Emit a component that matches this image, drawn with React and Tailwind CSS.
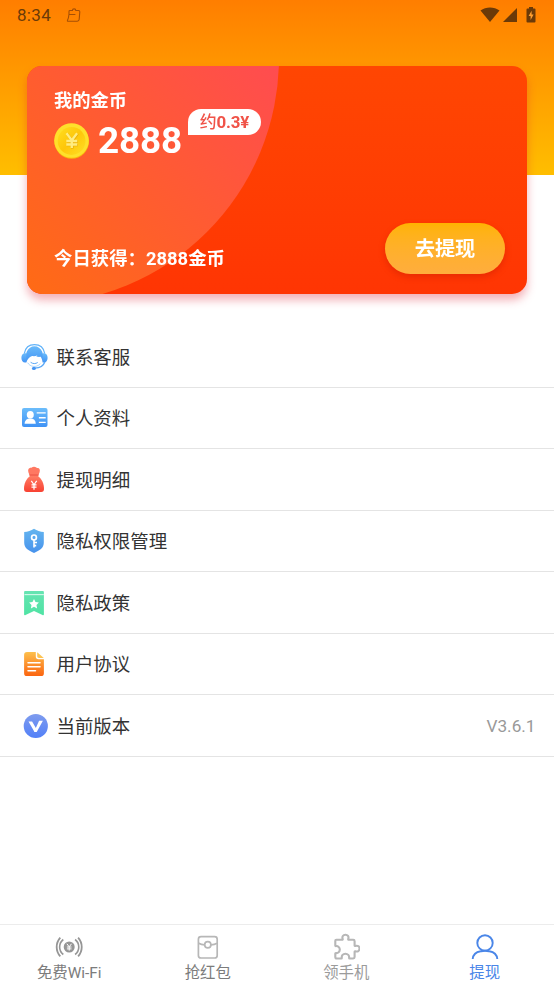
const MENU = [
  { label: '联系客服', Icon: ServiceIcon },
  { label: '个人资料', Icon: ProfileIcon },
  { label: '提现明细', Icon: MoneyBagIcon },
  { label: '隐私权限管理', Icon: ShieldIcon },
  { label: '隐私政策', Icon: BookmarkIcon },
  { label: '用户协议', Icon: DocumentIcon },
  { label: '当前版本', Icon: VersionIcon, value: 'V3.6.1' },
]

const TABS = [
  { label: '免费Wi-Fi', Icon: WifiCoinIcon, color: 'text-[#7c7c7c]' },
  { label: '抢红包', Icon: RedPacketIcon, color: 'text-[#7c7c7c]' },
  { label: '领手机', Icon: PuzzleIcon, color: 'text-[#9b9b9b]' },
  { label: '提现', Icon: UserIcon, color: 'text-[#4a86e8]' },
]

function ServiceIcon() {
  return (
    <svg width="28" height="28" viewBox="-0.5 0 28 28" fill="none">
      <defs>
        <linearGradient id="service" x1="0" y1="0" x2="0" y2="1">
          <stop stopColor="#69bafa" />
          <stop offset="1" stopColor="#4394f4" />
        </linearGradient>
      </defs>
      <path d="M3.8 10.5C4.8 5 8.8 1.7 14 1.7s9.2 3.3 10.2 8.8" stroke="#62b3f9" strokeWidth="1.3" />
      <path d="M5.6 19.5C3.6 11.5 7.2 3.3 14 3.3s10.4 8.2 8.4 16.2c-.6-2.600-1.300-4.300-2.300-5.700-1.600.2-3.300 0-4.300-.3l1.200-1.200c-1.700 1-3.600 1.100-5.400.8-2.200.7-4.400 2.700-6 6.400Z" fill="url(#service)" />
      <path d="M3.7 10.3h2.100v9.200H4.5C2.4 19.5.9 17.700.9 15s1-4 2.800-4.700ZM24.3 10.300h-2.100v9.200h1.300c2.100 0 3.600-1.800 3.600-4.500s-1-4-2.800-4.700Z" fill="url(#service)" />
      <path d="M7.2 19.7c2 4 8.700 5.500 12.600 1" stroke="#8cc5f9" strokeWidth=".7" />
      <path d="M10.4 19.5c2 1.500 4.700 1.500 6.500.2" stroke="#5aa8f7" strokeWidth="1" strokeLinecap="round" />
      <path d="M24.3 19c-1.300 3.800-4.800 6-10 6.200" stroke="#5aa8f7" strokeWidth="1.3" />
      <ellipse cx="13.4" cy="25.4" rx="2" ry="1.7" fill="#4394f4" />
    </svg>
  )
}

function ProfileIcon() {
  return (
    <svg width="28" height="28" viewBox="-0.5 0 28 28" fill="none">
      <defs>
        <linearGradient id="profile" x1="0" y1="0" x2="0" y2="1">
          <stop stopColor="#6cbdfb" />
          <stop offset="1" stopColor="#3f92f5" />
        </linearGradient>
      </defs>
      <rect x="1.5" y="4" width="25.500" height="19" rx="2" fill="url(#profile)" />
      <ellipse cx="9.8" cy="10.8" rx="3.500" ry="3.800" fill="#fff" />
      <path d="M4.1 19.700c.1-3.400 2.300-5.300 5.700-5.300s5.400 1.900 5.500 5.300Z" fill="#fff" />
      <path d="M16.200 8.900h9M18.400 13.700h6.800M18.400 18.400h6.800" stroke="#fff" strokeWidth="1.400" />
    </svg>
  )
}

function MoneyBagIcon() {
  return (
    <svg width="28" height="28" viewBox="0 0 28 28" fill="none">
      <defs>
        <linearGradient id="bag" x1="0" y1="0" x2="0" y2="1">
          <stop stopColor="#ff7c64" />
          <stop offset="1" stopColor="#f84132" />
        </linearGradient>
      </defs>
      <path d="M10.2 10.5C8.7 7.5 7.5 4.7 8.5 3.1c.8-1.2 2.400-.7 3.200-1.500 1.200-1 3.400-1 4.600 0 .8.8 2.400.3 3.200 1.500 1 1.600-.2 4.400-1.700 7.400Z" fill="#ff7862" />
      <path d="M9.3 9h9.400" stroke="#ea5344" strokeWidth="1" />
      <path d="M10 10.100h8c3.800 3 6 7.700 6 12.600 0 2.300-.9 3.300-2.800 3.300H6.800C4.900 26 4 25 4 22.700c0-4.900 2.200-9.600 6-12.600Z" fill="url(#bag)" />
      <path d="m11.3 14.800 2.700 4 2.700-4M14 18.800v5M11.500 18.900h5M11.500 21.100h5" stroke="#fff" strokeWidth="1.200" />
    </svg>
  )
}

function ShieldIcon() {
  return (
    <svg width="28" height="28" viewBox="0 0 28 28" fill="none">
      <defs>
        <linearGradient id="shield" x1="0" y1="0" x2="0" y2="1">
          <stop stopColor="#64b5ef" />
          <stop offset="1" stopColor="#4792ec" />
        </linearGradient>
      </defs>
      <path d="M14 1.800c3 2 6.200 3 9.800 3.200v10.800c0 5.200-4.200 7.800-9.800 10.200-5.600-2.400-9.800-5-9.800-10.200V5C7.800 4.800 11 3.800 14 1.800Z" fill="url(#shield)" />
      <circle cx="14" cy="10.400" r="2.400" stroke="#fff" strokeWidth="1.700" />
      <path d="M14 12.800v7.700M14 15.500h3M14 18.600h2.200" stroke="#fff" strokeWidth="1.600" />
    </svg>
  )
}

function BookmarkIcon() {
  return (
    <svg width="28" height="28" viewBox="0 0 28 28" fill="none">
      <defs>
        <linearGradient id="bookmark" x1="0" y1="0" x2="0" y2="1">
          <stop stopColor="#66e4b2" />
          <stop offset="1" stopColor="#4fe3a4" />
        </linearGradient>
      </defs>
      <path d="M5.300 2h17.400c.8 0 1.200.5 1.200 1.200v22.300c0 .8-.8 1-1.400.6L14 22l-8.500 4.100c-.6.4-1.400.2-1.400-.6V3.200C4.100 2.500 4.500 2 5.300 2Z" fill="url(#bookmark)" />
      <path d="M4.500 5.600h19.400" stroke="#d3faea" strokeWidth="1.100" />
      <path d="m14 10 1.500 3.100 3.400.5-2.400 2.400.6 3.400-3.100-1.600-3.100 1.600.6-3.400-2.400-2.400 3.400-.5Z" fill="#fff" />
    </svg>
  )
}

function DocumentIcon() {
  return (
    <svg width="28" height="28" viewBox="0 0 28 28" fill="none">
      <defs>
        <linearGradient id="document" x1="0" y1="0" x2="0" y2="1">
          <stop stopColor="#fdc04c" />
          <stop offset="1" stopColor="#fb6410" />
        </linearGradient>
      </defs>
      <path d="M7 2h8.800v4.500c0 1.700.9 2.700 2.700 2.700h5.400v14c0 1.900-1 2.900-2.900 2.900H7c-1.900 0-2.900-1-2.900-2.900V4.900C4.100 3 5.100 2 7 2Z" fill="url(#document)" />
      <path d="M17.200 2.200 23.800 8h-4.700c-1.300 0-1.900-.6-1.900-1.900Z" fill="#fdc453" />
      <path d="M8 12.800h12M8 16.800h12M8 20.800h7.500" stroke="#fff" strokeWidth="1.500" strokeLinecap="round" />
    </svg>
  )
}

function VersionIcon() {
  return (
    <svg width="28" height="28" viewBox="0 0 28 28" fill="none">
      <defs>
        <linearGradient id="version" x1="0" y1="0" x2="0" y2="1">
          <stop stopColor="#7f9cee" />
          <stop offset="1" stopColor="#5280f8" />
        </linearGradient>
      </defs>
      <circle cx="15.800" cy="14" r="12.100" fill="url(#version)" />
      <path d="M8.500 9.400h3.600l4.200 7.300-1.800 3.200ZM19.100 8.700h3.800l-6.200 11.400H14Z" fill="#fff" />
    </svg>
  )
}

function WifiCoinIcon() {
  return (
    <svg width="28" height="28" viewBox="0 0 28 28" fill="none" stroke="#969696">
      <circle cx="14.200" cy="14" r="5.500" fill="#969696" stroke="none" />
      <path d="M8.300 6.500a9.500 9.500 0 0 0 0 15M20.100 6.500a9.500 9.500 0 0 1 0 15" strokeWidth="1.600" />
      <path d="M5.300 4.600a14 14 0 0 0 0 18.800M23.100 4.600a14 14 0 0 1 0 18.800" strokeWidth="1.800" />
      <path d="m11.900 10.800 2.300 3 2.300-3M14.200 13.800v3.800M11.900 14h4.600M11.900 15.900h4.600" stroke="#fff" strokeWidth="1" />
    </svg>
  )
}

function RedPacketIcon() {
  return (
    <svg width="28" height="28" viewBox="0 0 28 28" fill="none" stroke="#b7b7b7" strokeWidth="1.700">
      <rect x="4.400" y="3.600" width="18.800" height="21.400" rx="2.600" />
      <path d="M4.700 10.200c2 1.200 3.700 1.500 6 1.600M23 10.200c-2 1.200-3.700 1.500-6 1.600" />
      <circle cx="13.800" cy="11.800" r="3.100" />
    </svg>
  )
}

function PuzzleIcon() {
  return (
    <svg width="28" height="28" viewBox="0 0 28 28" fill="none" stroke="#b7b7b7" strokeWidth="2.100" strokeLinejoin="round">
      <path d="M4.300 6.800h5.800c.5 0 .7-.3.6-.8-.9-2.400.4-4.300 2.700-4.300s3.700 1.900 2.800 4.300c-.1.500.1.800.6.800h4.400c.9 0 1.400.5 1.400 1.400v4.200c0 .5.300.7.8.6 2.400-.8 4.100.5 4.100 2.600s-1.700 3.500-4.100 2.700c-.5-.1-.8.100-.8.600v5.200c0 .9-.5 1.400-1.400 1.400h-3.600c-.3 0-.5-.2-.5-.5.4-2.500-1.300-4.300-3.700-4.300s-4 1.800-3.600 4.300c0 .3-.2.500-.5.500H4.700c-.9 0-1.400-.5-1.400-1.400v-3.500c0-.4.200-.5.500-.5 2.300.3 4-1.300 4-3.500s-1.700-3.800-4-3.500c-.3 0-.5-.1-.5-.5V7.800c0-.6.400-1 1-1Z" />
    </svg>
  )
}

function UserIcon() {
  return (
    <svg width="28" height="28" viewBox="0 0 28 28" fill="none" stroke="#4a86e8" strokeWidth="1.900">
      <circle cx="14" cy="9.900" r="7.700" />
      <path d="M1.700 26c.5-4.500 3.600-7 7.900-7.700 1.500-.3 2.800-.6 4.400-.6s2.900.3 4.400.6c4.300.7 7.400 3.200 7.900 7.700" />
    </svg>
  )
}

function CoinIcon() {
  return (
    <svg width="36" height="38" viewBox="0 0 36 38" fill="none">
      <defs>
        <linearGradient id="coin" x1="0" y1="0" x2="1" y2="1">
          <stop stopColor="#ffdf20" />
          <stop offset=".5" stopColor="#fec60a" />
          <stop offset="1" stopColor="#ffdf26" />
        </linearGradient>
      </defs>
      <circle cx="17.700" cy="19.500" r="17.300" fill="#f9b80b" />
      <circle cx="17.500" cy="18.500" r="17.300" fill="#ffe02b" />
      <circle cx="17.600" cy="19" r="13.900" fill="url(#coin)" />
      <path d="m13 11.800 5.300 7 5.300-7M18.300 18.800v7.700M12.800 19.500h11M12.800 23h11" stroke="#e6ab05" strokeWidth="2.600" />
      <path d="m12.500 11.300 5.300 7 5.300-7M17.800 18.300v7.700M12.300 19h11M12.300 22.500h11" stroke="#ffec80" strokeWidth="2.300" />
    </svg>
  )
}

function StatusBar() {
  return (
    <div className="flex h-[30px] items-center pr-[18px] pl-[17px] text-[#6b3a08]">
      <span className="mt-px text-[17px] leading-none tracking-[0.300px]">8:34</span>
      <svg className="ml-[15px]" width="15" height="15" viewBox="0 0 15 15" fill="none" stroke="#a54f05" strokeWidth="1.100">
        <path d="M3 6.200V3.400c0-.6.300-.9.900-.9h2.500c0-2.200 3.400-2.200 3.400 0h2.700c.9 0 1.300.4 1.300 1.200l-.6 7.600c-.1 1.300-.7 1.900-2 1.900H2.100c-.7 0-.9-.4-.6-.9C2.300 10.800 2.700 9 3 6.200ZM3.200 6.500h6.200" />
      </svg>
      <svg className="ml-auto" width="20" height="16" viewBox="0 0 20 16" fill="currentColor">
        <path d="M.5 3.500c5.500-4 13.500-4 19 0L10 15Z" />
      </svg>
      <svg className="ml-[2px]" width="16" height="16" viewBox="0 0 16 16" fill="currentColor">
        <path d="M1 15 15 1v14Z" />
      </svg>
      <svg className="ml-[8px]" width="10" height="16" viewBox="0 0 10 16">
        <path d="M3 0h4v1.500h1.500q1 0 1 1V14.500q0 1-1 1h-7q-1 0-1-1V2.500q0-1 1-1H3Z" fill="currentColor" />
        <path d="M5.600 3.800 2.600 9h2v4l3-5.400h-2Z" fill="#ff9f30" />
      </svg>
    </div>
  )
}

function BalanceCard() {
  return (
    <section className="relative mx-[27px] mt-[36px] flex h-[228px] flex-col overflow-hidden rounded-[15px] bg-linear-to-b from-[#ff4602] to-[#ff3503] text-white">
      <div className="absolute top-[-254px] left-[-240px] size-[492px] rounded-full bg-[linear-gradient(45deg,#ff6b14_25%,#ff5a34_52%,#ff4b52_76%)]" />
      <div className="relative flex flex-1 flex-col pr-[22px] pb-[20px] pl-[27px]">
        <h1 className="mt-[21px] text-[18.300px] leading-[28px] font-bold">我的金币</h1>
        <div className="flex h-[52px] items-start">
          <div className="mt-[7px]"><CoinIcon /></div>
          <span className="mt-[4px] ml-[8px] text-[36.900px] leading-[44px] font-bold tracking-[-0.200px]">2888</span>
          <span className="-mt-[6px] ml-[6px] flex h-[26px] w-[73px] items-center justify-center rounded-[13px] rounded-bl-none bg-white pt-px text-[16.900px] leading-none font-medium text-[#f05348]">
            约<b className="font-bold tracking-[-0.200px]">0.3¥</b>
          </span>
        </div>
        <div className="mt-auto flex items-end justify-between">
          <p className="mb-px text-[18.400px] leading-[28px] font-bold">今日获得：2888金币</p>
          <button className="h-[51px] w-[120px] rounded-full bg-linear-to-b from-[#ffb300] to-[#ffad3d] pt-[2px] text-[20.200px] font-bold shadow-[0_3px_6px_rgba(190,20,0,0.350)]">
            去提现
          </button>
        </div>
      </div>
    </section>
  )
}

export default function App() {
  return (
    <div className="flex h-[984px] w-full flex-col overflow-hidden bg-white font-[Roboto,'Noto_Sans_CJK_SC',sans-serif]" lang="zh-CN">
      <header className="h-[326px] shrink-0 bg-[linear-gradient(#ff7e00,#ffbe00)] bg-[length:100%_175px] bg-no-repeat">
        <StatusBar />
        <div className="[filter:drop-shadow(0_6px_5px_rgba(220,30,50,0.350))]">
          <BalanceCard />
        </div>
      </header>

      <main className="flex-1">
        {MENU.map(({ label, Icon, value }) => (
          <div key={label} className="flex h-[61.540px] items-center border-b border-[#e4e4e4] pt-px pr-[18.500px] pl-[20px]">
            <Icon />
            <span className="ml-[8.500px] pt-[2px] text-[18.460px] leading-none text-[#333]">{label}</span>
            {value && <span className="ml-auto pt-px text-[17.200px] leading-none text-[#999]">{value}</span>}
          </div>
        ))}
      </main>

      <nav className="grid h-[60px] shrink-0 grid-cols-4 border-t border-[#ececec]">
        {TABS.map(({ label, Icon, color }) => (
          <div key={label} className={`flex flex-col items-center pt-[8px] ${color}`}>
            <Icon />
            <span className="text-[15.400px] leading-[24px]">{label}</span>
          </div>
        ))}
      </nav>
    </div>
  )
}
